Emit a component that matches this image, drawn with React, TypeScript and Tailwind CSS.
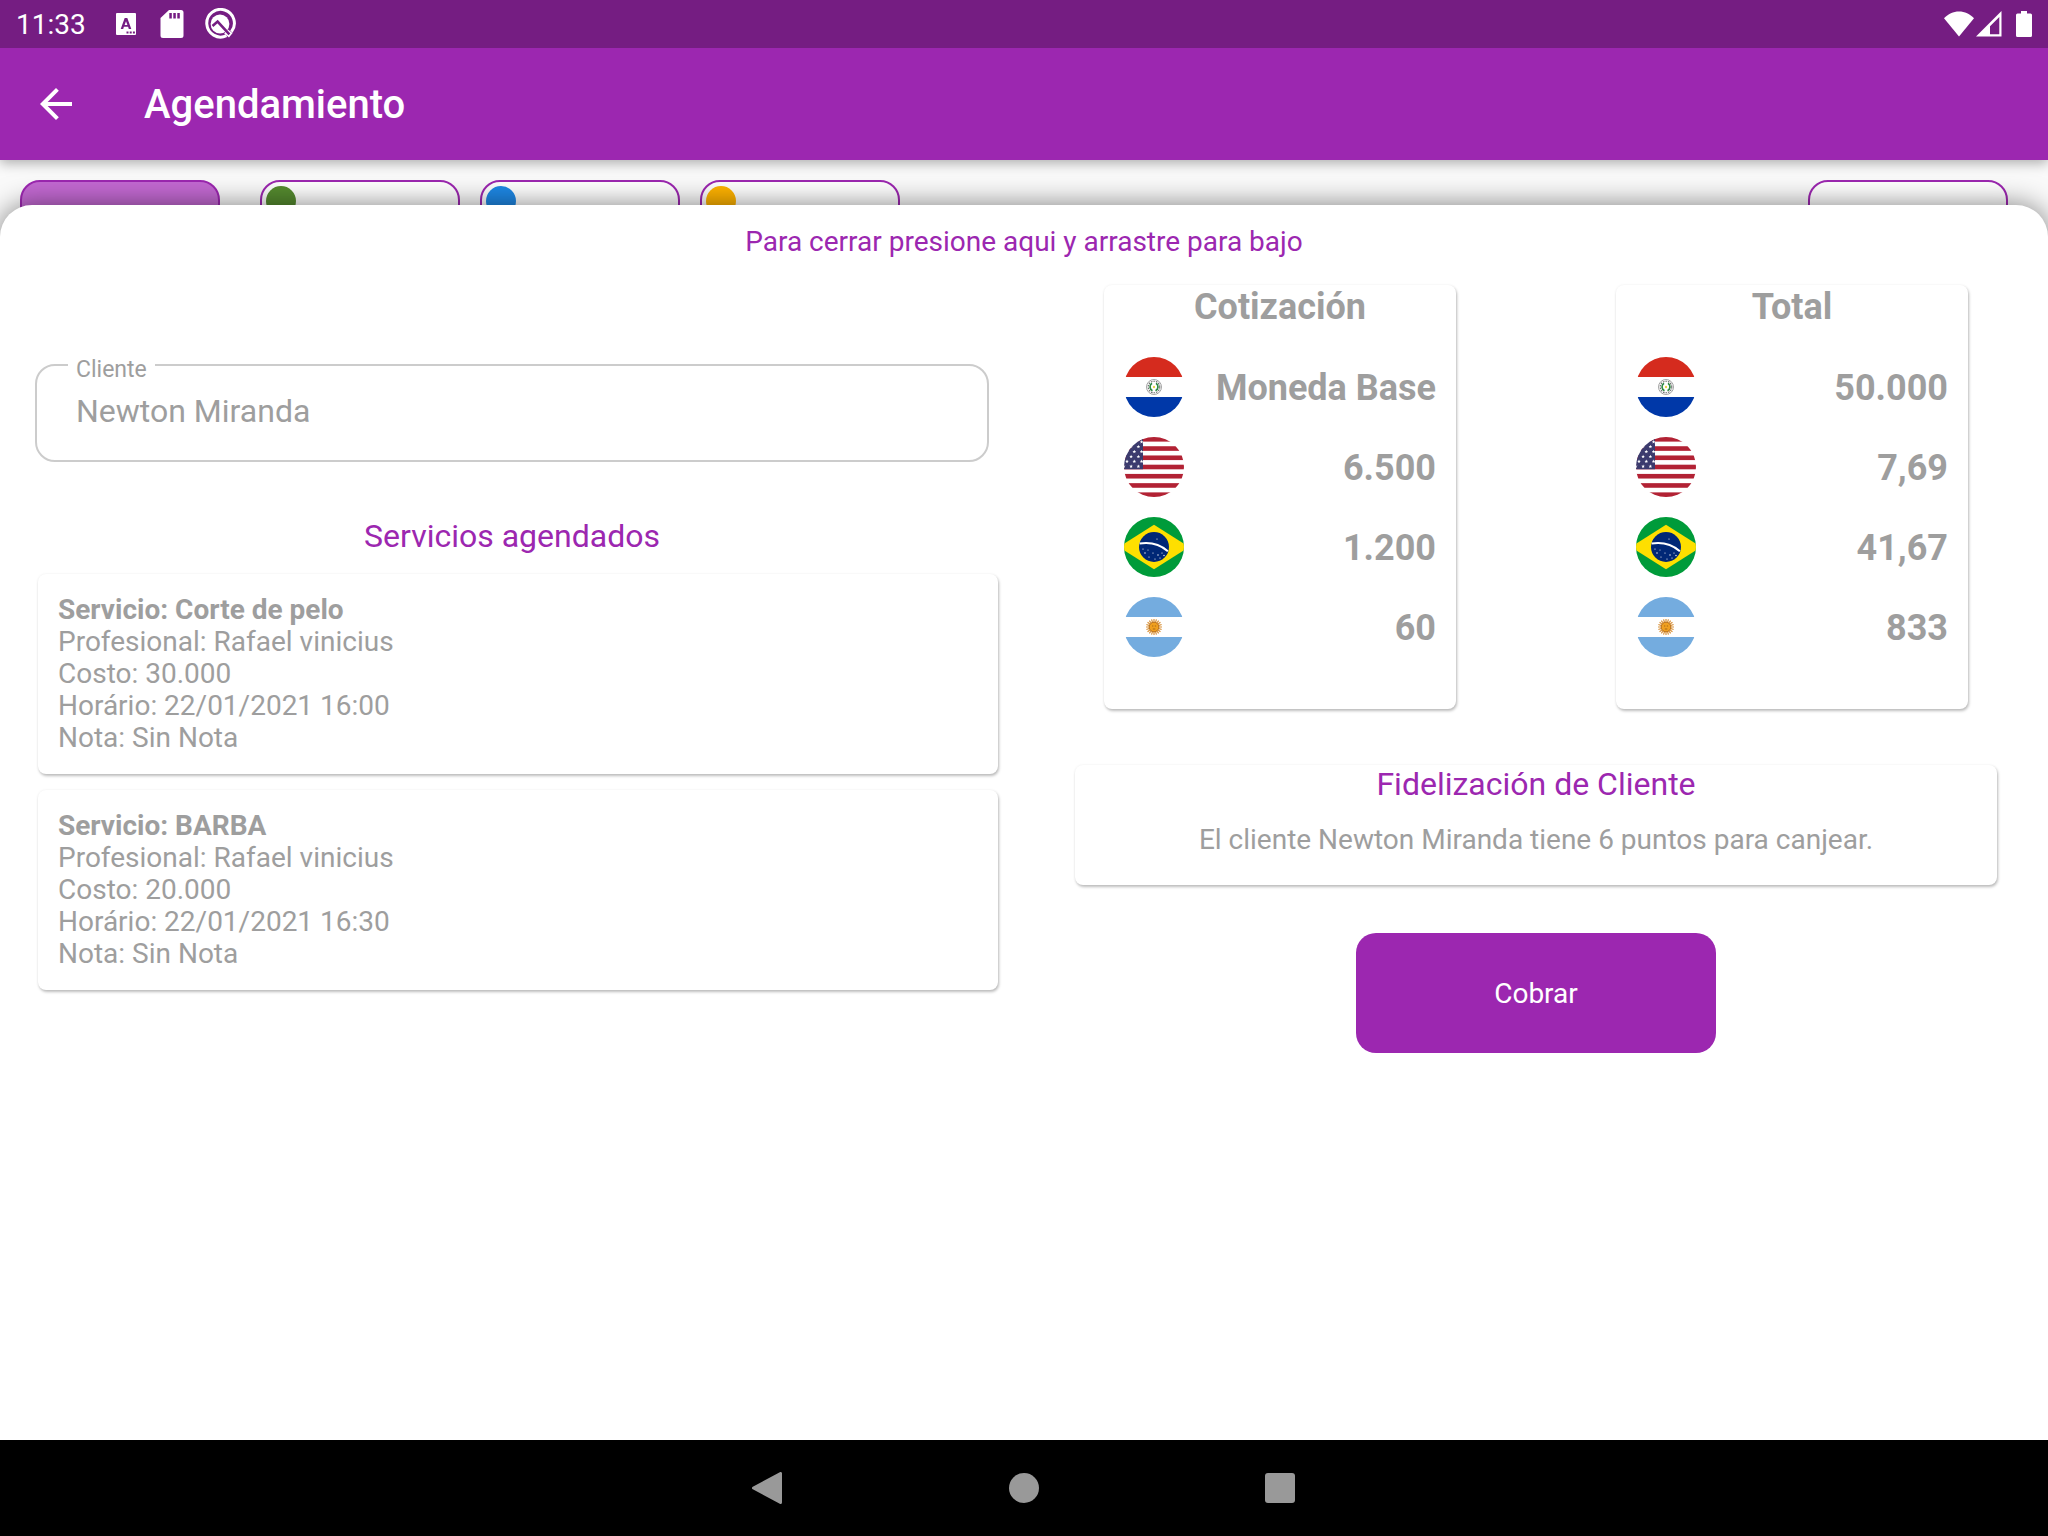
import type { ReactNode } from "react"

const services = [
  {
    name: "Corte de pelo",
    professional: "Rafael vinicius",
    cost: "30.000",
    time: "22/01/2021 16:00",
    note: "Sin Nota",
  },
  {
    name: "BARBA",
    professional: "Rafael vinicius",
    cost: "20.000",
    time: "22/01/2021 16:30",
    note: "Sin Nota",
  },
]

const rates = [
  { flag: "py", value: "Moneda Base" },
  { flag: "us", value: "6.500" },
  { flag: "br", value: "1.200" },
  { flag: "ar", value: "60" },
]

const totals = [
  { flag: "py", value: "50.000" },
  { flag: "us", value: "7,69" },
  { flag: "br", value: "41,67" },
  { flag: "ar", value: "833" },
]

const professionals = [
  { id: 1, dot: "bg-[#558b2f]" },
  { id: 2, dot: "bg-[#1e88e5]" },
  { id: 3, dot: "bg-[#ffb300]" },
]

const flagNames: Record<string, string> = {
  py: "Paraguay",
  us: "Estados Unidos",
  br: "Brasil",
  ar: "Argentina",
}

const stripes = [0, 2, 4, 6, 8, 10, 12]
const starRows = [0, 1, 2, 3, 4, 5]
const rays = Array.from({ length: 20 }, (_, i) => i * 18)

const flagArt: Record<string, ReactNode> = {
  py: (
    <>
      <path fill="#d52b1e" d="M0 0h60v20H0z" />
      <path fill="#fff" d="M0 20h60v20H0z" />
      <path fill="#0038a8" d="M0 40h60v20H0z" />
      <circle cx="30" cy="30" r="7.5" fill="none" stroke="#8c8c8c" strokeWidth="0.8" />
      <circle cx="30" cy="30" r="5.8" fill="none" stroke="#6a6a6a" strokeWidth="1.1" strokeDasharray="1.6 1" />
      <path d="M28 26.3a4.2 4.2 0 0 0 0.5 7.4M32 26.3a4.2 4.2 0 0 1-0.5 7.4" fill="none" stroke="#2f8a45" strokeWidth="1.7" />
      <circle cx="30" cy="30" r="1.2" fill="#e6d84a" />
    </>
  ),
  us: (
    <>
      <path fill="#fff" d="M0 0h60v60H0z" />
      {stripes.map((n) => (
        <rect key={n} y={(n * 60) / 13} width="60" height={60 / 13} fill="#b22234" />
      ))}
      <path fill="#3c3b6e" d="M0 0h19v32.3H0z" />
      {starRows.map((row) =>
        [0, 1, 2].map((col) => (
          <path
            key={`${row}-${col}`}
            fill="#fff"
            transform={`translate(${(row % 2 ? -0.2 : 3) + col * 7.3} ${4.8 + row * 4.9})`}
            d="M0-1.8 0.5-0.6 1.8-0.5 0.8 0.3 1.1 1.6 0 0.9-1.1 1.6-0.8 0.3-1.8-0.5-0.5-0.6z"
          />
        ))
      )}
    </>
  ),
  br: (
    <>
      <path fill="#009b3a" d="M0 0h60v60H0z" />
      <path fill="#fedf00" d="M30 7.7 65 30 30 52.3-5 30z" />
      <circle cx="30" cy="30" r="15" fill="#002776" />
      <path d="M15.6 26.6c10-1.6 20.5 1 28.3 7.6" fill="none" stroke="#fff" strokeWidth="2" />
      <g fill="#fff">
        <circle cx="19" cy="32" r="0.6" />
        <circle cx="21" cy="36" r="0.7" />
        <circle cx="24" cy="33" r="0.5" />
        <circle cx="25" cy="40" r="0.6" />
        <circle cx="29" cy="36" r="0.6" />
        <circle cx="31" cy="42" r="0.6" />
        <circle cx="34" cy="38" r="0.7" />
        <circle cx="36" cy="41" r="0.6" />
        <circle cx="38" cy="36" r="0.6" />
        <circle cx="40" cy="38.5" r="0.7" />
        <circle cx="33" cy="22" r="0.6" />
      </g>
    </>
  ),
  ar: (
    <>
      <path fill="#74acdf" d="M0 0h60v20H0z" />
      <path fill="#fff" d="M0 20h60v20H0z" />
      <path fill="#74acdf" d="M0 40h60v20H0z" />
      {rays.map((angle) => (
        <path key={angle} d="M30 25.5V22" stroke="#d9933c" strokeWidth="1.2" transform={`rotate(${angle} 30 30)`} />
      ))}
      <circle cx="30" cy="30" r="4.8" fill="#f0a020" stroke="#b9701a" strokeWidth="1" />
      <path d="M28 29h1.3M30.8 29h1.3M28.8 32h2.5" stroke="#8a5212" strokeWidth="0.7" />
    </>
  ),
}

function Flag({ code }: { code: string }) {
  return (
    <svg viewBox="0 0 60 60" role="img" aria-label={flagNames[code]} className="size-[60px] shrink-0 rounded-full">
      {flagArt[code]}
    </svg>
  )
}

function StatusBar() {
  return (
    <div className="relative z-20 flex h-12 items-center bg-[#751d82] px-4 text-white">
      <span className="pt-0.5 text-[28px] leading-8">11:33</span>
      <div className="ml-[30px] flex items-center gap-6">
        {/* Keyboard */}
        <svg viewBox="0 0 20 22" className="h-[22px] w-5">
          <path fill="currentColor" d="M1 0h18a1 1 0 0 1 1 1v20a1 1 0 0 1-1 1H1a1 1 0 0 1-1-1V1a1 1 0 0 1 1-1z" />
          <path
            fill="#751d82"
            fillRule="evenodd"
            d="M8.7 5h2.6l4 11h-2.5l-.7-2.2H7.9L7.2 16H4.7zM10 8.2 8.6 11.9h2.8z"
          />
          <path fill="#751d82" d="M10.5 18.5h2v2h-2zM13.7 18.5h2v2h-2zM16.9 18.5h2v2h-2z" />
        </svg>
        {/* SD card */}
        <svg viewBox="0 0 24 28" className="h-7 w-6">
          <path fill="currentColor" d="M9 0h12a2.5 2.5 0 0 1 2.5 2.5v23A2.5 2.5 0 0 1 21 28H3A2.5 2.5 0 0 1 .5 25.5V8z" />
          <path fill="#751d82" d="M9.3 3h2.5v5.5H9.3zM13.3 3h2.5v5.5h-2.5zM17.3 3h2.5v5.5h-2.5z" />
        </svg>
        <svg viewBox="0 0 32 32" className="-ml-1 size-8">
          <path d="M22.5 27.7A13.8 13.8 0 1 1 27.4 23.8" fill="none" stroke="currentColor" strokeWidth="3" />
          <path d="M23.6 21.2l-3.4 4.2 4.8 4.1 3.6-4.4z" fill="currentColor" />
          <circle cx="16" cy="16" r="9.4" fill="currentColor" />
          <path d="M8.5 18 13.6 13.6 25.4 26.4" fill="none" stroke="#751d82" strokeWidth="2.6" />
        </svg>
      </div>
      <div className="ml-auto flex items-center">
        <svg viewBox="0 0 30 26" className="h-[26px] w-[30px]">
          <path fill="currentColor" d="M15 25.5 0 7.2C4 3 9.3.5 15 .5S26 3 30 7.2z" />
        </svg>
        <svg viewBox="0 0 26 26" className="ml-[2px] h-[26px] w-[26px]">
          <path fill="currentColor" fillRule="evenodd" d="M25.5 0v25.5H0zM23.3 6 14 15.3v8h9.3z" />
        </svg>
        <svg viewBox="0 0 16 26" className="ml-[14px] h-[26px] w-4">
          <path
            fill="currentColor"
            d="M5 0h6v2.5h3.5A1.5 1.5 0 0 1 16 4v20.5a1.5 1.5 0 0 1-1.5 1.5h-13A1.5 1.5 0 0 1 0 24.5V4a1.5 1.5 0 0 1 1.5-1.5H5z"
          />
        </svg>
      </div>
    </div>
  )
}

function AppBar() {
  return (
    <header className="relative z-10 flex h-28 items-center bg-[#9c27b0] px-8 text-white shadow-[0_3px_12px_rgba(0,0,0,0.32)]">
      <button type="button" aria-label="Volver" className="flex size-12 items-center justify-center">
        <svg viewBox="0 0 32 32" className="size-8">
          <path fill="currentColor" d="M32 14H7.66l11.18-11.18L16 0 0 16l16 16 2.82-2.82L7.66 18H32z" />
        </svg>
      </button>
      <h1 className="ml-16 pt-0.5 text-[40px] font-medium leading-[48px]">Agendamiento</h1>
    </header>
  )
}

function ProfessionalTabs() {
  return (
    <div className="flex h-[100px] items-start px-5 pt-5">
      <button
        type="button"
        aria-label="Todos"
        className="h-20 w-[200px] rounded-[20px] border-2 border-[#9c27b0] bg-[#c369d2]"
      />
      <div className="ml-10 flex gap-5">
        {professionals.map((item) => (
          <button
            key={item.id}
            type="button"
            aria-label={`Profesional ${item.id}`}
            className="flex h-20 w-[200px] items-start rounded-[20px] border-2 border-[#9c27b0] bg-white p-1"
          >
            <span className={`size-[30px] rounded-full ${item.dot}`} />
          </button>
        ))}
      </div>
      <button
        type="button"
        aria-label="Fecha"
        className="ml-auto mr-5 h-20 w-[200px] rounded-[20px] border-2 border-[#9c27b0] bg-white"
      />
    </div>
  )
}

function CurrencyCard({ title, items }: { title: string; items: { flag: string; value: string }[] }) {
  return (
    <section className="w-[352px] rounded-lg bg-white px-5 pb-[42px] font-bold shadow-[1px_2px_3px_rgba(0,0,0,0.26),0_0_3px_rgba(0,0,0,0.05)]">
      <h2 className="text-center text-[36px] leading-[44px]">{title}</h2>
      <ul className="mt-[18px]">
        {items.map((item) => (
          <li key={item.flag} className="flex h-20 items-center justify-between">
            <Flag code={item.flag} />
            <span className="pt-0.5 text-[36px] leading-[44px]">{item.value}</span>
          </li>
        ))}
      </ul>
    </section>
  )
}

function NavigationBar() {
  return (
    <nav className="relative flex h-24 items-center justify-center gap-52 bg-black text-[#999999]">
      <button type="button" aria-label="Atrás" className="flex size-12 items-center justify-center">
        <svg viewBox="0 0 32 32" className="size-8">
          <path
            d="M28.5 1.5v29L1.5 16z"
            fill="currentColor"
            stroke="currentColor"
            strokeWidth="3"
            strokeLinejoin="round"
          />
        </svg>
      </button>
      <button type="button" aria-label="Inicio" className="flex size-12 items-center justify-center">
        <span className="size-[30px] rounded-full bg-current" />
      </button>
      <button type="button" aria-label="Recientes" className="flex size-12 items-center justify-center">
        <span className="size-[30px] rounded-[3px] bg-current" />
      </button>
    </nav>
  )
}

export default function App() {
  return (
    <div className="flex min-h-screen flex-col bg-[#fafafa] font-['Roboto',sans-serif] text-[#9e9e9e]">
      <StatusBar />
      <AppBar />
      <ProfessionalTabs />

      {/* Bottom sheet */}
      <main className="relative -mt-[55px] flex-1 rounded-t-[32px] bg-white pt-5 shadow-[0_0_28px_rgba(0,0,0,0.5)]">
        <p className="text-center text-[28px] leading-[34px] text-[#9c27b0]">
          Para cerrar presione aqui y arrastre para bajo
        </p>

        <div className="mt-[26px] grid grid-cols-2">
          <div className="px-[35px] pt-[79px]">
            <div className="relative">
              <label htmlFor="client" className="absolute -top-1.5 left-[33px] bg-white px-2 text-[23px] leading-6">
                Cliente
              </label>
              <input
                id="client"
                type="text"
                readOnly
                defaultValue="Newton Miranda"
                className="block h-[98px] w-full rounded-[20px] border-2 border-[#cccccc] bg-transparent px-[39px] pb-1 text-[32px] outline-none"
              />
            </div>

            <h2 className="mt-[55px] text-center text-[32px] leading-[38px] text-[#9c27b0]">Servicios agendados</h2>

            <div className="-mr-[9px] ml-[3px] mt-[19px] flex flex-col gap-4">
              {services.map((service) => (
                <article
                  key={service.name}
                  className="rounded-lg bg-white p-5 text-[28px] leading-8 shadow-[1px_2px_3px_rgba(0,0,0,0.26),0_0_3px_rgba(0,0,0,0.05)]"
                >
                  <h3 className="font-bold">Servicio: {service.name}</h3>
                  <p>Profesional: {service.professional}</p>
                  <p>Costo: {service.cost}</p>
                  <p>Horário: {service.time}</p>
                  <p>Nota: {service.note}</p>
                </article>
              ))}
            </div>
          </div>

          <div className="flex flex-col">
            <div className="flex justify-around">
              <CurrencyCard title="Cotización" items={rates} />
              <CurrencyCard title="Total" items={totals} />
            </div>

            <section className="mx-[51px] mt-14 rounded-lg bg-white pb-7 text-center shadow-[1px_2px_3px_rgba(0,0,0,0.26),0_0_3px_rgba(0,0,0,0.05)]">
              <h2 className="text-[32px] leading-[38px] text-[#9c27b0]">Fidelización de Cliente</h2>
              <p className="mt-5 text-[28px] leading-[34px]">El cliente Newton Miranda tiene 6 puntos para canjear.</p>
            </section>

            <button
              type="button"
              className="mt-12 h-[120px] w-[360px] self-center rounded-[20px] bg-[#9c27b0] pt-0.5 text-[28px] text-white"
            >
              Cobrar
            </button>
          </div>
        </div>
      </main>

      <NavigationBar />
    </div>
  )
}
